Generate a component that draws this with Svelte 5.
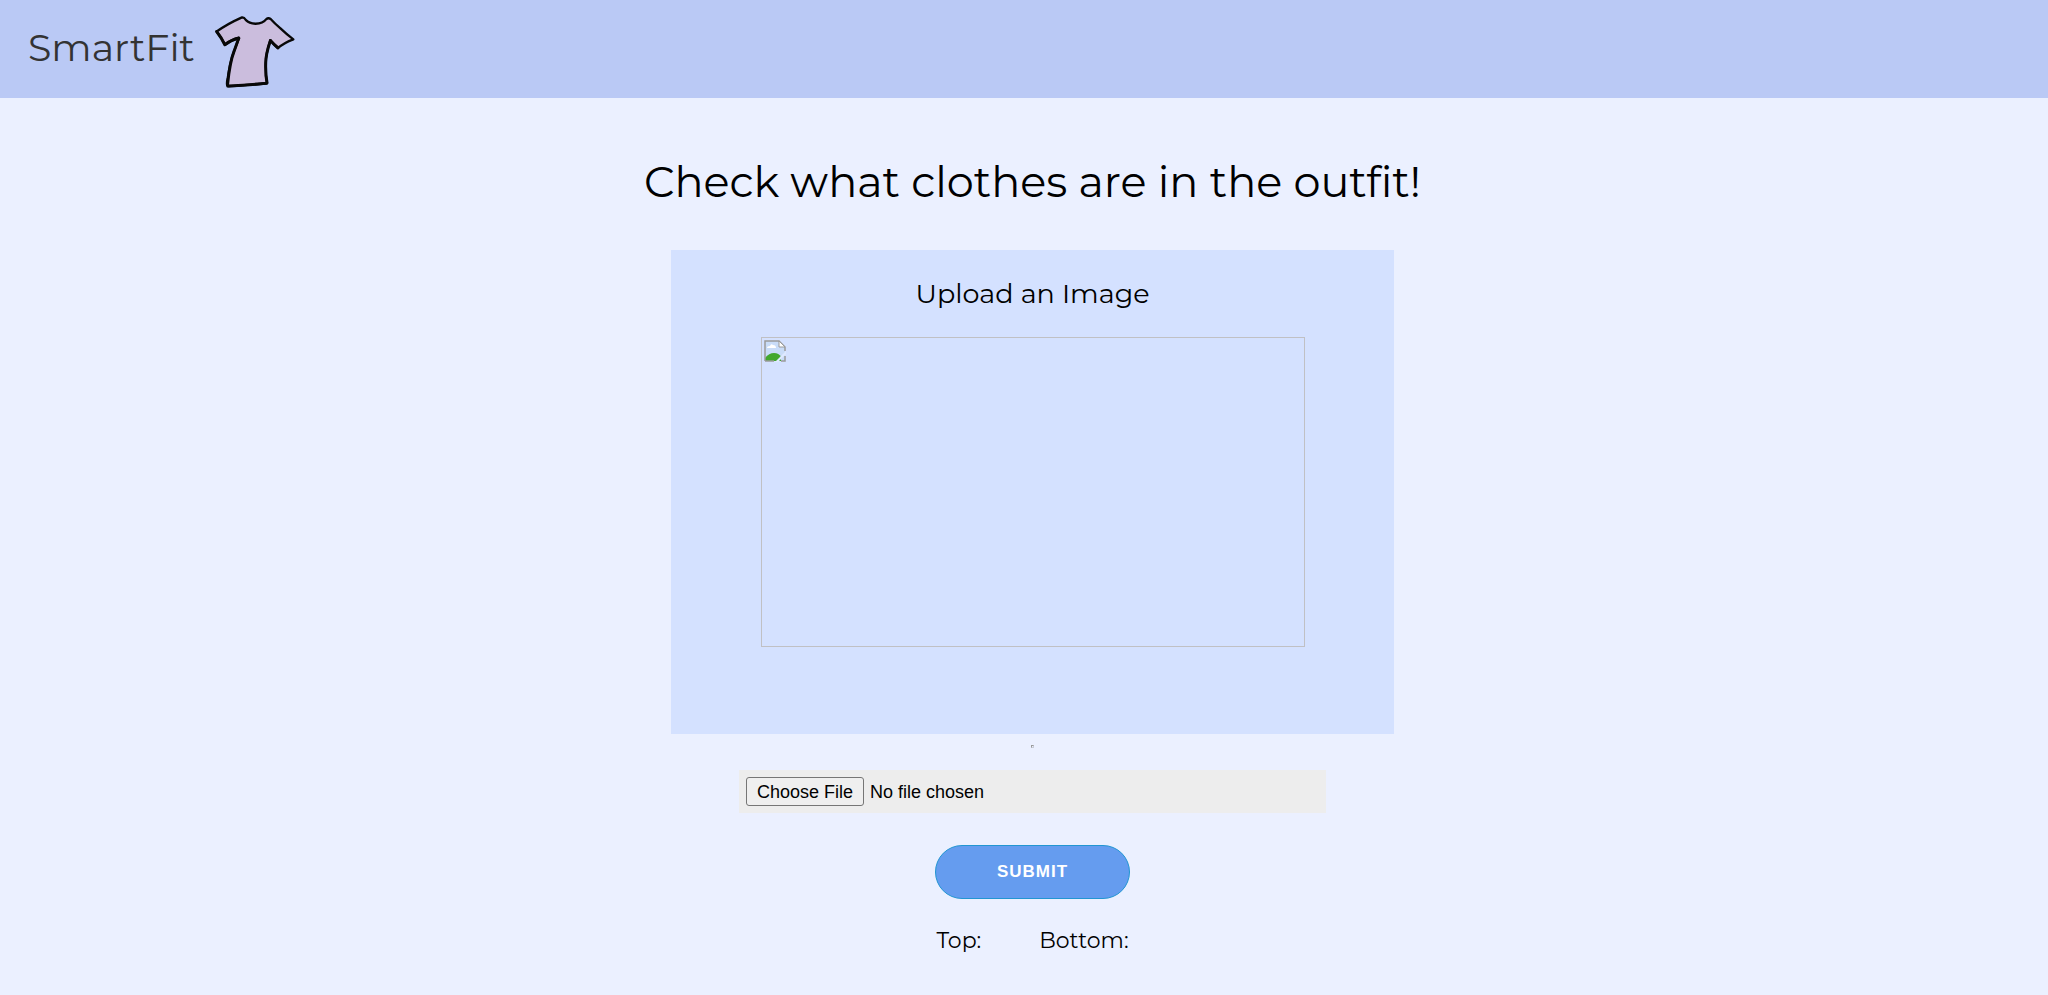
<script>
  const results = $state({ top: '', bottom: '' });
</script>

<header>
  <a class="brand" href="/">
    <span>SmartFit</span>
    <svg class="shirt" viewBox="42 30 246 225" preserveAspectRatio="none" aria-hidden="true">
      <path
        class="cloth"
        d="M47 82 Q80 59 124 40 Q130 39 136 48 Q145 57 165 59 Q188 58 197 46 Q204 40 211 45 Q224 59 240 72 Q258 89 280 105 Q252 115 233 131 Q221 120 210 108 Q197 145 196 175 Q195 210 200 235 Q165 239 140 240 Q105 244 80 244 Q76 238 81 218 Q88 170 100 140 L115 101 Q92 106 72 121 Q62 101 47 82Z"
      />
      <path class="bold" d="M114 102 L100 140 Q87 172 80 240 M210 109 Q196 150 196 175 Q195 210 200 234 M83 243 Q150 240 199 235" />
      <path class="bold" d="M47 82 Q62 101 72 121 Q92 106 114 101 M211 109 Q222 121 233 130" />
    </svg>
  </a>
</header>

<main>
  <h1>Check what clothes are in the outfit!</h1>

  <section class="card">
    <h2>Upload an Image</h2>
    <div class="preview">
      <svg viewBox="0 0 22 22" aria-hidden="true">
        <path d="M1 1H15L21 7V21H1Z" fill="#c9dcf8" />
        <path d="M3 8Q3 6 6 6Q7 3 9 5Q12 5 12 8Z" fill="#fff" />
        <path d="M1 21V18Q5 13 10 13Q15 13 17 17V21Z" fill="#43a82e" />
        <path d="M1 21V1H15L21 7V11M1 21H10M17 21H21V16" fill="none" stroke="#9b9b9b" stroke-width="1.5" />
        <path d="M15 1V7H21Z" fill="#fff" stroke="#9b9b9b" />
        <path d="M11 22L22 11V14L14 22Z" fill="#dfe9ff" />
      </svg>
    </div>
  </section>

  <hr />

  <form onsubmit={(event) => event.preventDefault()}>
    <input type="file" accept="image/*" aria-label="Outfit image" />
    <button type="submit">SUBMIT</button>
  </form>

  <div class="results">
    <p>Top:{results.top}</p>
    <p>Bottom:{results.bottom}</p>
  </div>
</main>

<style>
  :global(body) {
    margin: 0;
    background: #ebf0ff;
    color: #000;
    font-family: Montserrat, Inter, sans-serif;
    font-weight: 400;
  }

  header {
    display: flex;
    align-items: center;
    padding: 14px 28px 8px;
    background: #bac9f5;
  }

  .brand {
    display: flex;
    align-items: center;
    gap: 20px;
    color: #333;
    font-size: 38px;
    line-height: 48px;
    text-decoration: none;
  }

  .brand span {
    padding-bottom: 8px;
  }

  .shirt {
    display: block;
    width: 81px;
    height: 76px;
  }

  .cloth {
    fill: #cbbddd;
    stroke: #080808;
    stroke-width: 7;
    stroke-linejoin: round;
  }

  .bold {
    fill: none;
    stroke: #080808;
    stroke-width: 9;
    stroke-linecap: round;
    stroke-linejoin: round;
  }

  main {
    display: flex;
    flex-direction: column;
    align-items: center;
    padding: 56px 0 24px 17px;
  }

  h1,
  h2,
  p {
    margin: 0;
    font-weight: 400;
  }

  h1 {
    font-size: 43px;
    line-height: 56px;
    text-align: center;
  }

  .card {
    box-sizing: border-box;
    display: flex;
    flex-direction: column;
    align-items: center;
    gap: 27px;
    width: 100%;
    max-width: 723px;
    margin-top: 40px;
    padding: 28px 24px 87px;
    background: #d4e1ff;
  }

  h2 {
    font-size: 27px;
    line-height: 32px;
  }

  .preview {
    box-sizing: border-box;
    width: 100%;
    max-width: 544px;
    aspect-ratio: 544 / 310;
    padding: 2px;
    border: 1px solid #c0c0c4;
  }

  .preview svg {
    display: block;
    width: 22px;
    height: 22px;
  }

  hr {
    box-sizing: border-box;
    width: 3px;
    height: 3px;
    margin: 11px 0 22px;
    border: 1px solid;
    border-color: #9a9a9a #c8ccd8 #c8ccd8 #9a9a9a;
  }

  form {
    display: flex;
    flex-direction: column;
    align-items: center;
    gap: 32px;
    width: 100%;
  }

  input {
    box-sizing: border-box;
    width: 100%;
    max-width: 587px;
    padding: 7px;
    background: #ededed;
    color: #000;
    font: 400 18px/20px "Liberation Sans", Arial, sans-serif;
  }

  input::file-selector-button {
    height: 29px;
    margin: 0 6px 0 0;
    padding: 0 10px;
    border: 1px solid #767676;
    border-radius: 3px;
    background: #efefef;
    color: #000;
    font: inherit;
  }

  button {
    padding: 16px 61px;
    border: 1px solid #2296d2;
    border-radius: 27px;
    background: #659cef;
    color: #fff;
    font: 700 17px/20px "Liberation Sans", Arial, sans-serif;
    letter-spacing: 1px;
  }

  .results {
    display: flex;
    gap: 58px;
    margin-top: 28px;
    font-size: 22px;
    line-height: 28px;
  }
</style>
